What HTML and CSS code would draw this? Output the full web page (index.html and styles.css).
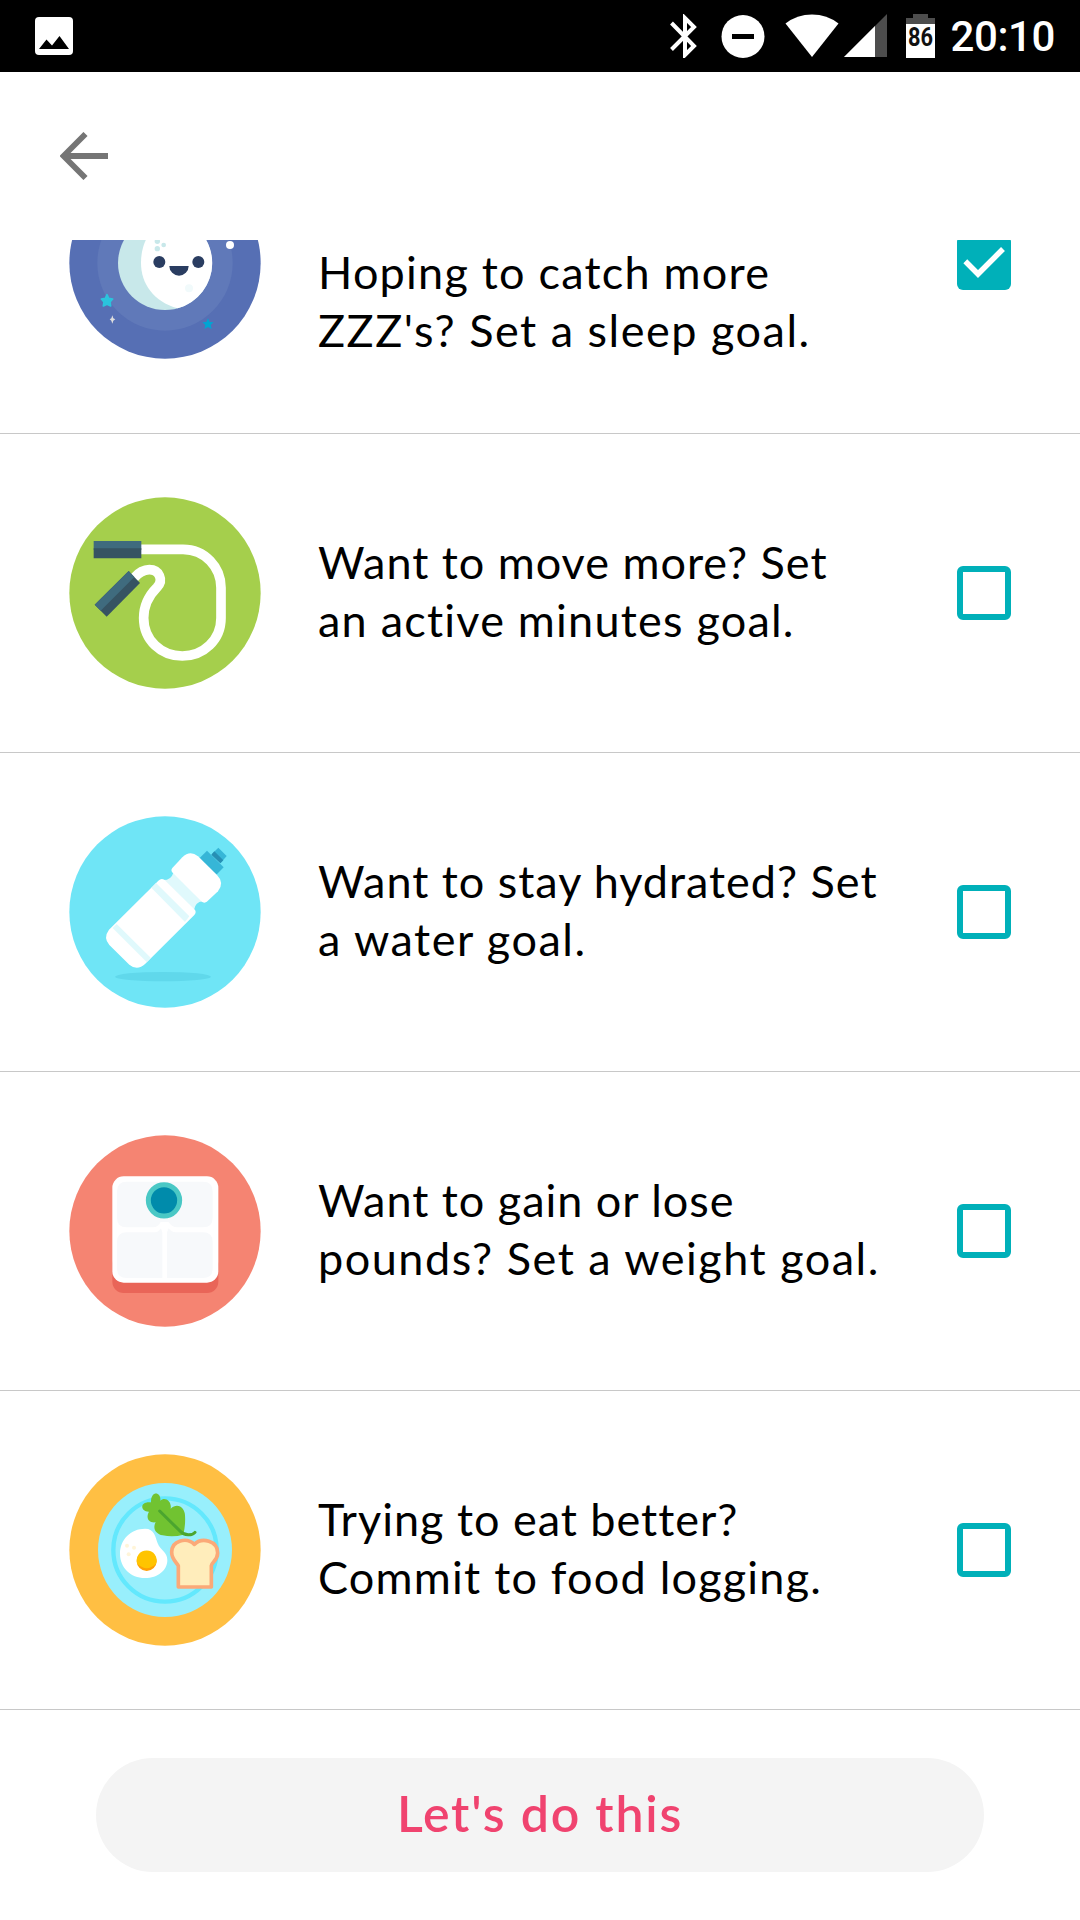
FILE: index.html
```html
<!DOCTYPE html>
<html lang="en">
<head>
<meta charset="utf-8">
<title>Goals</title>
<link rel="stylesheet" href="styles.css">
</head>
<body>
<div class="screen">
  <header class="status">
    <svg class="photo" width="38" height="38" viewBox="0 0 38 38"><rect width="38" height="38" rx="4" fill="#fff"/><path d="M4 32 11.500 22.500 17 28.500 24.500 19 34 32z"/></svg>
    <svg class="bluetooth" width="27" height="44" viewBox="0 0 27 44"><path d="M1.500 9 24 32 15 41V4L24 13 1.500 35.500" fill="none" stroke="#fff" stroke-width="4"/></svg>
    <svg class="dnd" width="44" height="44" viewBox="0 0 44 44"><circle cx="22" cy="22.500" r="21.500" fill="#fff"/><path d="M11 20h22v5H11z"/></svg>
    <svg class="wifi" width="54" height="44" viewBox="0 0 54 44"><path d="M.5 9.500Q12 .5 27 .5T53.500 9.500L27 43z" fill="#fff"/></svg>
    <svg class="signal" width="43" height="44" viewBox="0 0 43 44"><path d="M43 0v43H0z" fill="#4d4d4d"/><path d="M31 12v31H0z" fill="#fff"/></svg>
    <svg class="battery" width="29" height="44" viewBox="0 0 29 44"><path d="M7 0h15v4h7v6H0V4h7z" fill="#4d4d4d"/><path d="M0 10h29v34H0z" fill="#fff"/><text class="battery-level" x="14.500" y="32" text-anchor="middle" textLength="25" lengthAdjust="spacingAndGlyphs">86</text></svg>
    <span class="clock">20:10</span>
  </header>
  <nav class="appbar">
    <svg width="48" height="48" viewBox="0 0 48 48"><path d="M25.500 2 3.500 24l22 22M4 24h44" fill="none" stroke="#757575" stroke-width="5.800"/></svg>
  </nav>
  <main class="list">
    <section class="row row-sleep">
      <svg class="art" viewBox="57 -159 576 576">
        <circle cx="345" cy="129" r="287" fill="#566fb4"/><circle cx="345" cy="129" r="203" fill="#6079b9"/>
        <circle cx="345" cy="129" r="141" fill="#c8e8ea"/>
        <path d="M383 265C310 245 273 190 273 129C273 60 310 0 383-7A141 141 0 0 1 383 265z" fill="#fff"/>
        <g fill="#c8e8ea"><circle cx="322" cy="64" r="8"/><circle cx="341" cy="75" r="7"/><circle cx="322" cy="86" r="8"/></g>
        <circle cx="417" cy="205" r="12" fill="#f1fafb"/>
        <g fill="#2a3d61"><circle cx="328" cy="126" r="18"/><circle cx="445" cy="126" r="18"/><path d="M358 138h58a29 29 0 0 1-58 0z"/></g>
        <circle cx="540" cy="75" r="12" fill="#fff"/>
        <path d="m171 224 5 11 12 2-8 9 2 12-11-5-11 5 2-12-8-9 12-2z" fill="#2bc4dd" stroke="#2bc4dd" stroke-width="5" stroke-linejoin="round"/>
        <path d="m474 295 5 11 12 1-9 8 3 12-11-6-11 6 3-12-9-8 12-1z" fill="#00a5d3"/>
        <path d="m187 286 3 9 6 3-6 4-3 9-3-9-5-4 5-3z" fill="#dedede"/>
      </svg>
      <p class="label"><span class="track-m">Hoping to catch more</span><span class="track-l">ZZZ's? Set a sleep goal.</span></p>
      <span class="check checked"><svg width="54" height="54" viewBox="0 0 54 54"><path d="M8.300 25.300 21 38 46 13" fill="none" stroke="#fff" stroke-width="5.500"/></svg></span>
    </section>
    <section class="row">
      <svg class="art" viewBox="57 51 576 576">
        <circle cx="345" cy="339" r="287" fill="#a5cf4c"/>
        <path d="M270 208H399C465 208 513 262 513 323V414C513 480 460 528 397 528C333 528 281 480 281 414C281 378 297 346 321 322C342 300 327 269 298 269C277 269 264 280 252 294" fill="none" stroke="#fff" stroke-width="29"/>
        <path d="M131 183h143v26H131z" fill="#3f6b7e"/><path d="M131 205h143v30H131z" fill="#365362"/>
        <path d="m134 374 102-101 34 36-100 101z" fill="#365362"/><path d="m134 374 102-101 17 18-101 101z" fill="#3f6b7e"/>
      </svg>
      <p class="label"><span class="track-s">Want to move more? Set</span><span class="track-m">an active minutes goal.</span></p>
      <span class="check"></span>
    </section>
    <section class="row">
      <svg class="art" viewBox="57 48 576 576">
        <circle cx="345" cy="336" r="287" fill="#6fe5f6"/>
        <ellipse cx="339" cy="530" rx="144" ry="14" fill="#60d8eb"/>
        <path d="m449 174 22-22 50 50-22 22z" fill="#36b6d7"/><path d="m505 143 25 25-18 21-27-26z" fill="#36b6d7"/><path d="m484 164 9-10 27 27-9 9z" fill="#278fb4"/>
        <path d="M340 240Q364 240 370 218L458 304Q436 306 432 330z" fill="#e0f9fc"/>
        <path d="M177 389 325 242Q334 233 344 240L433 328Q441 336 433 345L286 491Q262 514 238 494L178 435Q159 413 177 389z" fill="#fff"/>
        <path d="m318 249 100 100-13 17-101-103zM200 372l102 101-12 13L188 384z" fill="#e0f9fc"/>
        <path d="M367 204 397 172Q420 149 444 169L501 225Q524 248 504 274L472 304Q463 312 454 304L368 218Q361 211 367 204z" fill="#fff"/>
      </svg>
      <p class="label"><span class="track-s">Want to stay hydrated? Set</span><span class="track-l">a water goal.</span></p>
      <span class="check"></span>
    </section>
    <section class="row">
      <svg class="art" viewBox="57 45 576 576">
        <circle cx="345" cy="333" r="287" fill="#f58472"/>
        <rect x="187" y="400" width="318" height="119" rx="34" fill="#e96558"/><rect x="187" y="169" width="318" height="319" rx="34" fill="#fff"/>
        <g fill="#f7f9fb"><path d="M230 185H459Q488 185 488 214V293Q488 322 459 322H381Q366 322 356 306H332Q324 322 309 322H230Q201 322 201 293V214Q201 185 230 185z"/>
        <path d="M230 337H315Q326 337 333 325L337 337V474H230Q201 474 201 445V366Q201 337 230 337zM351 337 356 325Q364 337 377 337H459Q488 337 488 366V445Q488 474 459 474H351z"/></g>
        <circle cx="342" cy="241" r="47" fill="#008bab" stroke="#4ac8c5" stroke-width="15"/>
      </svg>
      <p class="label"><span class="track-s">Want to gain or lose</span><span class="track-l">pounds? Set a weight goal.</span></p>
      <span class="check"></span>
    </section>
    <section class="row">
      <svg class="art" viewBox="57 42 576 576">
        <circle cx="345" cy="330" r="287" fill="#ffbf43"/><circle cx="345" cy="330" r="201" fill="#98effc"/><circle cx="345" cy="330" r="155" fill="none" stroke="#63e8fd" stroke-width="13"/>
        <path d="M285 266C314 266 316 291 323 310C331 331 352 337 352 360C352 391 324 414 285 414C241 414 210 382 210 341C210 299 242 266 285 266z" fill="#fff"/>
        <circle cx="290" cy="363" r="30" fill="#ff9f05"/><path d="M262 372a30 30 0 1 1 56 0q-28 25-56 0z" fill="#ffc400"/>
        <g fill="#fff5d9"><circle cx="231" cy="317" r="6"/><circle cx="252" cy="323" r="6"/><circle cx="236" cy="343" r="6"/></g>
        <path d="M303 187C302 151 334 154 331 182C345 169 366 184 362 206C385 185 405 207 405 226Q407 254 400 284Q370 292 338 286C317 282 307 265 317 247C297 250 286 234 297 215C271 216 267 183 303 187z" fill="#71c331"/>
        <path d="m329 213 62 61c12 14 36 13 44 3" fill="none" stroke="#4ba52f" stroke-width="9" stroke-linecap="round"/>
        <path d="M385 441V378C383 370 365 360 365 337C365 300 411 291 433 313C456 291 503 302 503 339C503 361 485 367 484 377V441z" fill="#ffedbb" stroke="#fba978" stroke-width="11" stroke-linejoin="round"/>
      </svg>
      <p class="label"><span class="track-s">Trying to eat better?</span><span class="track-m">Commit to food logging.</span></p>
      <span class="check"></span>
    </section>
  </main>
  <footer class="footer"><button class="cta">Let's do this</button></footer>
</div>
</body>
</html>
```
FILE: styles.css
```css
* { box-sizing: border-box; }
body { margin: 0; background: #fff; font-family: Lato, "Open Sans", sans-serif; color: #000; }
.screen { width: 1080px; height: 1920px; display: flex; flex-direction: column; overflow: hidden; background: #fff; }

.status { height: 72px; flex: none; display: flex; align-items: center; background: #000; padding: 0 25px 0 35px; }
.photo { margin-right: auto; }
.bluetooth { margin-right: 24px; }
.dnd { margin-right: 20px; }
.wifi { margin-right: 5px; }
.signal { margin-right: 19px; }
.battery { margin-right: 15px; overflow: visible; }
.battery-level { font: 700 25px Roboto, sans-serif; fill: #111; }
.clock { font: 500 42px/48px Roboto, sans-serif; letter-spacing: -0.4px; color: #fff; padding-top: 2px; }

.appbar { height: 168px; flex: none; display: flex; align-items: center; padding: 0 60px; }

.list { height: 1470px; flex: none; display: flex; flex-direction: column; justify-content: flex-end; overflow: hidden; }
.row { height: 319px; flex: none; display: flex; align-items: center; padding: 0 69px; border-bottom: 1px solid #c8c8c8; }
.row-sleep { height: 341px; }
.art { width: 192px; height: 192px; flex: none; }
.label { flex: 1; margin: 0 0 0 57px; padding-bottom: 4px; font-size: 45px; line-height: 58px; display: flex; flex-direction: column; align-items: flex-start; white-space: nowrap; }
.row-sleep .label { padding-top: 80px; }
.track-s { letter-spacing: 0.98px; }
.track-m { letter-spacing: 1.22px; }
.track-l { letter-spacing: 1.5px; }

.check { width: 54px; height: 54px; flex: none; border: 6px solid #00b0b9; border-radius: 6px; }
.checked { border: 0; background: #00b0b9; }
.checked svg { display: block; }

.footer { height: 210px; flex: none; padding: 48px 96px; }
.cta { display: flex; align-items: center; justify-content: center; width: 100%; height: 114px; border: 0; border-radius: 57px; background: #f4f4f4; color: #f0436f; font: 600 50px/60px Lato, "Open Sans", sans-serif; letter-spacing: 1.8px; padding: 0 0 4px; }
```
